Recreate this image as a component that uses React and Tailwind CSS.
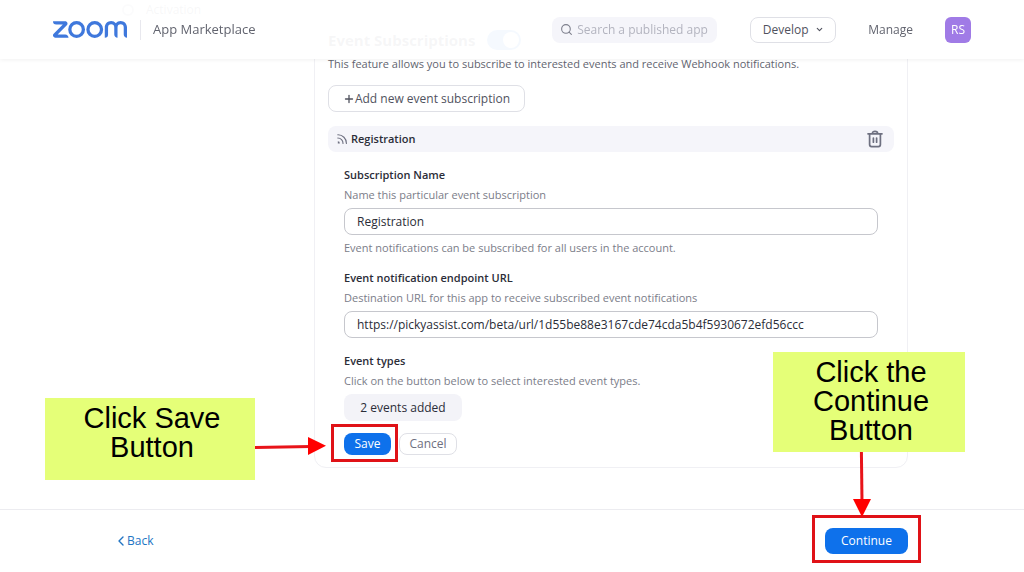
import { ChevronDown, Plus, Search } from "lucide-react";
import { SiZoom } from "react-icons/si";

function TrashIcon() {
  return (
    <svg viewBox="0 0 16 18" className="h-[18px] w-4" fill="none" stroke="#6e7080" strokeWidth="1.7" strokeLinecap="round" strokeLinejoin="round" aria-hidden="true">
      <path d="M1 3.8h14M5.4 3.4C5.4 2 6.3 1.4 8 1.4s2.6.6 2.6 2M2.6 4v10.6c0 1.2.8 2 2 2h6.8c1.2 0 2-.8 2-2V4" />
      <path d="M6.4 8v4.2M9.6 8v4.2" />
    </svg>
  );
}

function FeedIcon() {
  return (
    <svg viewBox="0 0 10 10" className="size-[10px]" fill="none" stroke="#6e7080" strokeWidth="1.1" strokeLinecap="round" aria-hidden="true">
      <path d="M.8 4a5.2 5.2 0 0 1 5.2 5.4M.8 .8a8.4 8.4 0 0 1 8.6 8.6" />
      <path d="M.8 7.2a2 2 0 0 1 2 2.2H.8z" fill="#6e7080" stroke="none" />
    </svg>
  );
}

function BackIcon() {
  return (
    <svg viewBox="0 0 6 10" className="h-[10px] w-[6px]" fill="none" stroke="currentColor" strokeWidth="1.4" strokeLinecap="round" strokeLinejoin="round" aria-hidden="true">
      <path d="M5 1 1 5l4 4" />
    </svg>
  );
}

function Header() {
  return (
    <header className="fixed inset-x-0 top-0 z-10 flex h-[59px] items-center justify-between bg-white/95 px-[53px] shadow-[0_1px_4px_rgba(0,0,0,0.06)]">
      <div className="flex items-center">
        <a href="#home" aria-label="Zoom">
          <SiZoom viewBox="0 9.3 24 5.4" className="h-[17px] w-[74px] text-[#3f78dc]" />
        </a>
        <span className="ml-[13px] h-5 w-px bg-[#e8e8ee]" />
        <span className="ml-3 text-[13px] text-[#62646f]">App Marketplace</span>
      </div>
      <div className="flex items-center">
        <label className="flex h-[26px] w-[165px] items-center gap-1 rounded-lg bg-[#f5f5fa] pr-1 pl-2">
          <Search className="size-[13px] shrink-0 text-[#7d7f8c]" strokeWidth={2} />
          <input type="text" aria-label="Search" placeholder="Search a published app" className="h-full w-full min-w-0 bg-transparent text-[12px] text-[#444653] outline-none placeholder:text-[#b3b4bf]" />
        </label>
        <button className="ml-[33px] flex h-[26px] w-[86px] items-center justify-center gap-1.5 rounded-lg border border-[#dfe0e6] bg-white text-[12px] text-[#50525e]">
          Develop
          <ChevronDown className="size-[9px]" strokeWidth={3} />
        </button>
        <a href="#manage" className="ml-8 text-[12px] text-[#62646f]">Manage</a>
        <button className="ml-8 size-[26px] rounded-md bg-[#a07be6] text-[12px] text-white">RS</button>
      </div>
    </header>
  );
}

function Field({ id, label, hint, value, note }) {
  return (
    <div className="flex flex-col text-[11px] leading-5">
      <label htmlFor={id} className="font-semibold text-[#2b2d38]">{label}</label>
      <p className="text-[#7b7d89]">{hint}</p>
      <input id={id} defaultValue={value} className="mt-[3px] h-[27px] w-full rounded-lg border border-[#c6c7cd] bg-white px-3 text-[12px] text-[#2b2d38] outline-none" />
      {note && <p className="mt-[3px] text-[#7b7d89]">{note}</p>}
    </div>
  );
}

function SaveAnnotation() {
  return (
    <>
      <span className="pointer-events-none absolute -top-[9px] -right-[7px] -bottom-[7px] -left-[13px] border-3 border-[#e01217]" />
      <svg viewBox="0 0 74 20" className="pointer-events-none absolute top-[3px] -left-[89px] h-5 w-[74px]" aria-hidden="true">
        <path d="M0 11.4 56 10.4" stroke="#e8141a" strokeWidth="3" />
        <path d="M53 1v18l18-9.2z" fill="#ff0000" />
      </svg>
      <p className="absolute -top-[35px] -left-[299px] h-[82px] w-[210px] bg-[#e5ff78] pt-[6px] pr-6 pl-7 text-center font-['Liberation_Sans',Arial,sans-serif] text-[29px] leading-[29px] text-black">
        Click Save Button
      </p>
    </>
  );
}

function ContinueAnnotation() {
  return (
    <>
      <span className="pointer-events-none absolute -top-[13px] -right-[13px] -bottom-[9px] -left-[13px] border-3 border-[#e01217]" />
      <p className="absolute -top-[176px] -left-[52px] h-[100px] w-[192px] bg-[#e5ff78] pt-[6px] pr-6 pl-7 text-center font-['Liberation_Sans',Arial,sans-serif] text-[29px] leading-[29px] text-black">
        Click the Continue Button
      </p>
      <svg viewBox="0 0 20 66" className="pointer-events-none absolute -top-[76px] left-[27px] h-[66px] w-5" aria-hidden="true">
        <path d="M9.4 0 10 50" stroke="#e8141a" strokeWidth="3" />
        <path d="M1 47h18l-9 18z" fill="#ff0000" />
      </svg>
    </>
  );
}

export default function App() {
  return (
    <div className="flex min-h-screen flex-col bg-white font-['Open_Sans','Noto_Sans',sans-serif]">
      <Header />

      <main className="mx-auto flex w-full max-w-[792px] flex-1 pb-[41px]">
        <aside className="w-[198px] shrink-0">
          <a href="#activation" className="flex items-center gap-3 pl-1.5 text-[12px] leading-5 text-[#62646f]">
            <span className="size-3 rounded-full border-2 border-[#b3b4bf]" />
            Activation
          </a>
        </aside>

        <section className="mt-[17px] min-w-0 flex-1 rounded-xl border border-[#f0f0f4] px-[13px] pt-3 pb-[12px]">
          <div className="flex items-center gap-3">
            <h2 id="events-heading" className="text-[15px] leading-5 font-bold text-[#50525e]">Event Subscriptions</h2>
            <label className="relative flex h-5 w-[34px] items-center justify-end rounded-full bg-[#3b8bea] px-0.5">
              <input type="checkbox" defaultChecked aria-labelledby="events-heading" className="absolute inset-0 opacity-0" />
              <span className="size-4 rounded-full bg-white" />
            </label>
          </div>
          <p className="mt-1 text-[11px] leading-5 text-[#62646f]">
            This feature allows you to subscribe to interested events and receive Webhook notifications.
          </p>
          <button className="mt-[11px] flex h-[27px] w-[197px] items-center justify-center rounded-lg border border-[#dfe0e6] text-[12px] text-[#50525e]">
            <Plus className="size-3" strokeWidth={2.6} />
            Add new event subscription
          </button>

          <div className="mt-[14px] flex h-[26px] items-center gap-1 rounded-lg bg-[#f5f5fa] pr-[11px] pl-[9px]">
            <FeedIcon />
            <h3 className="text-[11px] font-semibold text-[#2b2d38]">Registration</h3>
            <button aria-label="Delete subscription" className="ml-auto">
              <TrashIcon />
            </button>
          </div>

          <form className="flex flex-col px-4 pt-[13px]" onSubmit={(e) => e.preventDefault()}>
            <Field
              id="subscription-name"
              label="Subscription Name"
              hint="Name this particular event subscription"
              value="Registration"
              note="Event notifications can be subscribed for all users in the account."
            />
            <div className="mt-[10px]">
              <Field
                id="endpoint-url"
                label="Event notification endpoint URL"
                hint="Destination URL for this app to receive subscribed event notifications"
                value="https://pickyassist.com/beta/url/1d55be88e3167cde74cda5b4f5930672efd56ccc"
              />
            </div>
            <div className="mt-[13px] text-[11px] leading-5">
              <h4 className="font-semibold text-[#2b2d38]">Event types</h4>
              <p className="text-[#7b7d89]">Click on the button below to select interested event types.</p>
              <button type="button" className="mt-[3px] h-[27px] w-[118px] rounded-lg bg-[#f3f3f8] text-[12px] text-[#2b2d38]">
                2 events added
              </button>
            </div>
            <div className="mt-3 flex gap-2">
              <div className="relative">
                <button type="submit" className="block h-[22px] w-[47px] rounded-lg bg-[#0e71eb] text-[12px] text-white">Save</button>
                <SaveAnnotation />
              </div>
              <button type="button" className="h-[22px] w-[58px] rounded-lg border border-[#dfe0e6] text-[12px] text-[#6e7080]">Cancel</button>
            </div>
          </form>
        </section>
      </main>

      <footer className="border-t border-[#ececf0] py-[18px]">
        <div className="mx-auto flex w-full max-w-[792px] items-center justify-between pl-0.5">
          <a href="#back" className="flex items-center gap-[3px] text-[12px] text-[#2275c4]">
            <BackIcon />
            Back
          </a>
          <div className="relative">
            <button className="block h-[26px] w-[83px] rounded-lg bg-[#0e71eb] text-[12px] text-white">Continue</button>
            <ContinueAnnotation />
          </div>
        </div>
      </footer>
    </div>
  );
}
